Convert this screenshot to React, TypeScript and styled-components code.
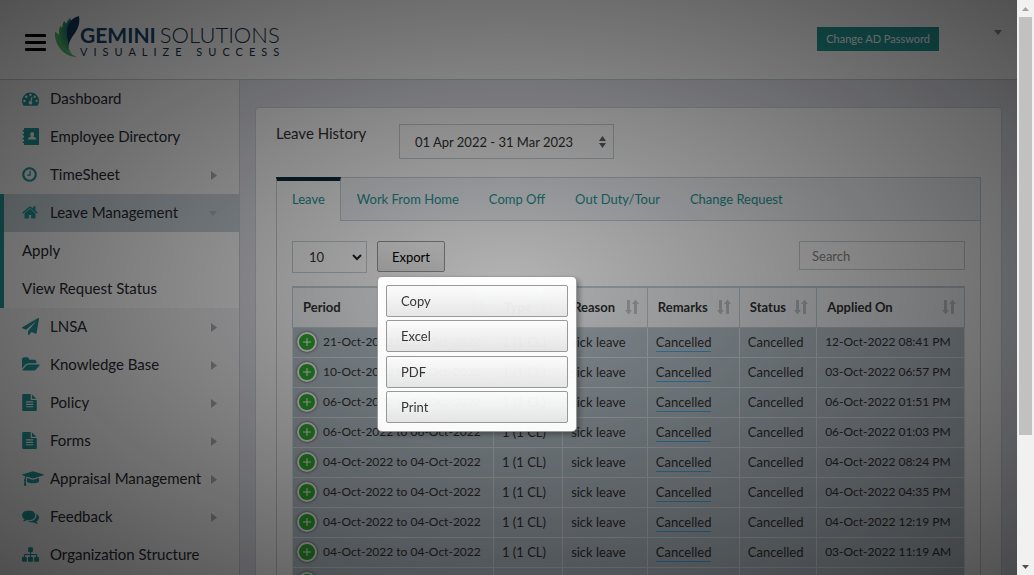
import React from "react";
import styled, { createGlobalStyle } from "styled-components";

const GlobalStyle = createGlobalStyle`
  *, *::before, *::after { box-sizing: border-box; }
  body {
    margin: 0;
    font-family: Lato, "Open Sans", sans-serif;
    font-size: 14px;
    color: #333;
    background: #e4e5ed;
  }
  button, input, select { font-family: inherit; }
`;

const teal = "#249696";
const line = "#c6d2d8";

const Shell = styled.div`
  display: grid;
  grid-template-columns: minmax(0, 1fr) 17px;
  height: 100vh;
  overflow: hidden;
`;

const Page = styled.div`
  height: 100vh;
  overflow: hidden;
`;

const Header = styled.header`
  display: flex;
  align-items: flex-start;
  height: 80px;
  padding: 0 15px 0 25px;
  background: #fff;
  border-bottom: 1px solid #bfd3cf;
`;

const MenuToggle = styled.button`
  display: flex;
  flex-direction: column;
  gap: 4px;
  width: 21px;
  margin-top: 34px;
  padding: 0;
  border: 0;
  background: none;
`;

const Bar = styled.span`
  height: 3px;
  width: 100%;
  border-radius: 1px;
  background: #000;
`;

const Logo = styled.a`
  display: flex;
  margin: 15px 0 0 9px;
  text-decoration: none;
`;

const LogoWords = styled.span`
  display: block;
  padding-top: 7px;
`;

const LogoName = styled.span`
  display: block;
  font-size: 22px;
  font-weight: 300;
  line-height: 26px;
  color: #17324a;
  white-space: nowrap;
`;

const LogoBold = styled.b`
  margin-right: 4px;
  font-size: 21px;
  font-weight: 700;
  color: #1b4a72;
`;

const LogoTag = styled.span`
  display: block;
  font-size: 11px;
  line-height: 8px;
  letter-spacing: 6px;
  color: #17324a;
  white-space: nowrap;
`;

const PasswordButton = styled.button`
  height: 24px;
  margin: 27px 55px 0 auto;
  padding: 0 9px;
  border: 0;
  background: #239a97;
  color: #fff;
  font-size: 11px;
  line-height: 24px;
`;

const UserCaret = styled.button`
  height: 5px;
  margin-top: 30px;
  padding: 0;
  border: 0;
  background: none;
  color: #8a8f96;
  display: flex;
`;

const Body = styled.div`
  display: grid;
  grid-template-columns: 240px minmax(0, 1fr);
  min-height: 100%;
`;

const Sidebar = styled.nav`
  background: #f5f5f7;
  border-right: 1px solid #c6d4d8;
`;

const NavList = styled.ul`
  margin: 0;
  padding: 0;
  list-style: none;
`;

const NavGroup = styled.li<{ $open?: boolean }>`
  border-left: ${(p) => (p.$open ? `4px solid ${teal}` : "0")};
`;

const NavLink = styled.a<{ $active?: boolean; $open?: boolean }>`
  display: flex;
  align-items: center;
  height: 38px;
  padding: 0 22px 2px ${(p) => (p.$open ? 18 : 22)}px;
  background: ${(p) => (p.$active ? "#cad5dc" : "transparent")};
  color: #2a2a30;
  font-size: 15px;
  text-decoration: none;
  white-space: nowrap;
`;

const SubLink = styled(NavLink)`
  background: #fff;
`;

const NavIcon = styled.span`
  flex: 0 0 28px;
  display: flex;
  color: ${teal};
`;

const NavCaret = styled.span<{ $faint?: boolean }>`
  display: flex;
  margin-left: auto;
  padding-top: 2px;
  color: ${(p) => (p.$faint ? "#b4bec5" : "#a9b0b6")};
`;

const Main = styled.main`
  padding: 27px 15px 0;
  background: #e4e5ed;
`;

const Card = styled.section`
  min-height: 600px;
  padding: 16px 20px 20px;
  background: #fff;
  border: 1px solid #cdd9dc;
  border-radius: 4px;
`;

const Filter = styled.div`
  display: flex;
  align-items: flex-start;
  margin-bottom: 18px;
`;

const FilterLabel = styled.label`
  width: 123px;
  font-size: 15px;
  line-height: 18px;
`;

const SelectBox = styled.div<{ $width: number }>`
  position: relative;
  width: ${(p) => p.$width}px;
`;

const Select = styled.select<{ $height: number; $pad: number }>`
  appearance: none;
  display: block;
  width: 100%;
  height: ${(p) => p.$height}px;
  padding: 0 ${(p) => p.$pad}px;
  border: 1px solid ${line};
  border-radius: 0;
  background: #fff;
  color: #333;
  font-size: 13px;
`;

const SelectMark = styled.span<{ $right: number }>`
  position: absolute;
  top: 0;
  bottom: 0;
  right: ${(p) => p.$right}px;
  display: flex;
  align-items: center;
  pointer-events: none;
`;

const Tabs = styled.div`
  display: flex;
  height: 44px;
  background: #f1f4f8;
  border: 1px solid ${line};
`;

const Tab = styled.button<{ $active?: boolean }>`
  height: ${(p) => (p.$active ? 44 : 42)}px;
  margin: ${(p) => (p.$active ? "-1px 2px 0 -1px" : "0 2px 0 0")};
  padding: ${(p) => (p.$active ? "0 15px 4px" : "0 14px")};
  border: 0 solid ${line};
  border-width: ${(p) => (p.$active ? "0 1px" : "0")};
  border-top: ${(p) => (p.$active ? "4px solid #0d2c3c" : "0")};
  background: ${(p) => (p.$active ? "#fff" : "transparent")};
  color: ${teal};
  font-size: 13px;
  white-space: nowrap;
`;

const Panel = styled.div`
  min-height: 480px;
  padding: 20px 15px;
  border: 1px solid ${line};
  border-top: 0;
`;

const Toolbar = styled.div`
  display: flex;
  align-items: flex-start;
  gap: 10px;
  height: 45px;
`;

const ExportWrap = styled.div`
  position: relative;
`;

const ExportButton = styled.button`
  display: block;
  width: 68px;
  height: 31px;
  padding: 0;
  border: 1px solid #999;
  border-radius: 2px;
  background: linear-gradient(to bottom, #fff 0%, #e9e9e9 100%);
  color: #000;
  font-size: 13px;
`;

const ExportMenu = styled.div`
  position: absolute;
  z-index: 20;
  top: 35px;
  left: 0;
  display: flex;
  flex-direction: column;
  justify-content: space-between;
  width: 200px;
  height: 156px;
  padding: 8px;
  background: #fff;
  border: 1px solid rgba(0, 0, 0, 0.4);
  border-radius: 5px;
  box-shadow: 3px 3px 5px rgba(0, 0, 0, 0.3);
  opacity: 0.97;
`;

const ExportItem = styled(ExportButton)`
  width: 100%;
  height: 32px;
  padding: 0 14px;
  text-align: left;
  color: #333;
`;

const Search = styled.input`
  width: 166px;
  height: 29px;
  margin-left: auto;
  padding: 0 12px;
  border: 1px solid ${line};
  background: #fff;
  font-size: 13px;
  &::placeholder { color: #888; opacity: 1; }
`;

const Table = styled.table`
  width: 100%;
  table-layout: fixed;
  border-collapse: collapse;
  border: 1px solid ${line};
  border-top-width: 2px;
`;

const Th = styled.th`
  height: 40px;
  padding: 0 8px 0 10px;
  border: 1px solid ${line};
  background: #f6f8fb;
  color: #333;
  font-size: 13px;
  font-weight: 700;
  text-align: left;
`;

const ThInner = styled.div`
  display: flex;
  align-items: center;
  justify-content: space-between;
`;

const Td = styled.td<{ $date?: boolean }>`
  height: 30px;
  padding: 0 0 0 8px;
  border: 1px solid #e0e6ea;
  background: #bac6ce;
  color: #333;
  font-size: ${(p) => (p.$date ? 12 : 13)}px;
  line-height: 20px;
  white-space: nowrap;
  overflow: hidden;
`;

const PeriodCell = styled.div`
  display: flex;
  align-items: center;
  gap: 6px;
  margin-left: -4px;
`;

const Expand = styled.button`
  display: flex;
  align-items: center;
  justify-content: center;
  width: 20px;
  height: 20px;
  padding: 0;
  border: 2px solid #fff;
  border-radius: 50%;
  background: #31b131;
  box-shadow: 0 0 3px #444;
`;

const Remark = styled.a`
  display: inline-block;
  height: 18px;
  line-height: 16px;
  border-bottom: 1px solid #45aef0;
  color: #333;
  text-decoration: none;
`;

const Overlay = styled.div`
  position: fixed;
  z-index: 10;
  inset: 0 17px 0 0;
  background: radial-gradient(ellipse farthest-corner at center, rgba(0, 0, 0, 0.3) 0%, rgba(0, 0, 0, 0.7) 100%);
  opacity: 0.97;
`;

const Scrollbar = styled.div`
  display: grid;
  grid-template-rows: 17px minmax(0, 1fr) 17px;
  justify-items: center;
  align-items: center;
  background: #f1f1f1;
`;

const Thumb = styled.div`
  align-self: start;
  width: 13px;
  height: 77.3%;
  background: #c1c1c1;
`;

type IconShape = { box: [number, number, number]; d: string };

const icons: Record<string, IconShape> = {
  gauge: { box: [0, 0, 1792], d: "M384 1152q0-53-37.5-90.5t-90.5-37.5-90.5 37.5-37.5 90.5 37.5 90.5 90.5 37.5 90.5-37.5 37.5-90.5zm192-448q0-53-37.5-90.5t-90.5-37.5-90.5 37.5-37.5 90.5 37.5 90.5 90.5 37.5 90.5-37.5 37.5-90.5zm428 481l101-382q6-26-7.5-48.5t-38.5-29.5-48 6.5-30 39.5l-101 382q-60 5-107 43.5t-63 98.5q-20 77 20 146t117 89 146-20 89-117q16-60-6-117t-72-91zm660-33q0-53-37.5-90.5t-90.5-37.5-90.5 37.5-37.5 90.5 37.5 90.5 90.5 37.5 90.5-37.5 37.5-90.5zm-640-640q0-53-37.5-90.5t-90.5-37.5-90.5 37.5-37.5 90.5 37.5 90.5 90.5 37.5 90.5-37.5 37.5-90.5zm448 192q0-53-37.5-90.5t-90.5-37.5-90.5 37.5-37.5 90.5 37.5 90.5 90.5 37.5 90.5-37.5 37.5-90.5zm320 448q0 261-141 483-19 29-54 29h-1402q-35 0-54-29-141-221-141-483 0-182 71-348t191-286 286-191 348-71 348 71 286 191 191 286 71 348z" },
  book: { box: [0, 0, 1792], d: "M300 0H1700q92 0 92 92V1700q0 92-92 92H300q-92 0-92-92V1580H110q-40 0-40-40v-90q0-40 40-40h98v-220H110q-40 0-40-40v-90q0-40 40-40h98V780H110q-40 0-40-40v-90q0-40 40-40h98V390H110q-40 0-40-40v-90q0-40 40-40h98V92q0-92 92-92zM1070 430q-95 0-150 65t-55 165q0 110 65 185v75l-190 75q-90 40-90 130v95h840v-95q0-90-90-130l-190-75v-75q65-75 65-185 0-100-55-165t-150-65z" },
  clock: { box: [128, 0, 1536], d: "M1024 544v448q0 14-9 23t-23 9h-320q-14 0-23-9t-9-23v-64q0-14 9-23t23-9h224v-352q0-14 9-23t23-9h64q14 0 23 9t9 23zm416 352q0-148-73-273t-198-198-273-73-273 73-198 198-73 273 73 273 198 198 273 73 273-73 198-198 73-273zm224 0q0 209-103 385.5t-279.5 279.5-385.5 103-385.5-103-279.5-279.5-103-385.5 103-385.5 279.5-279.5 385.5-103 385.5 103 279.5 279.5 103 385.5z" },
  home: { box: [64, 0, 1664], d: "M1472 992v480q0 26-19 45t-45 19h-384v-384h-256v384h-384q-26 0-45-19t-19-45v-480q0-1 .5-3t.5-3l575-474 575 474q1 2 1 6zm223-69l-62 74q-8 9-21 11h-3q-13 0-21-7l-692-577-692 577q-12 8-24 7-13-2-21-11l-62-74q-8-10-7-23.5t11-21.5l719-599q32-26 76-26t76 26l244 204v-195q0-14 9-23t23-9h192q14 0 23 9t9 23v408l219 182q10 8 11 21.5t-7 23.5z" },
  plane: { box: [0, 0, 1792], d: "M1764 11q33 24 27 64l-256 1536q-5 29-32 45-14 8-31 8-11 0-24-5l-453-185-242 295q-18 23-49 23-13 0-22-4-19-7-30.5-23.5t-11.5-36.5v-349l864-1059-1069 925-395-162q-37-14-40-55-2-40 32-59l1664-960q15-9 32-9 20 0 36 11z" },
  folder: { box: [0, 0, 1920], d: "M1879 952q0 31-31 66l-336 396q-43 51-120.5 86.5t-143.5 35.5h-1088q-34 0-60.5-13t-26.5-43q0-31 31-66l336-396q43-51 120.5-86.5t143.5-35.5h1088q34 0 60.5 13t26.5 43zm-343-344v160h-832q-94 0-197 47.5t-164 119.5l-337 396-5 6q0-4-.5-12.5t-.5-12.5v-960q0-92 66-158t158-66h320q92 0 158 66t66 158v32h544q92 0 158 66t66 158z" },
  file: { box: [128, 0, 1536], d: "M1596 476q14 14 28 36h-472v-472q22 14 36 28zm-476 164h544v1056q0 40-28 68t-68 28h-1344q-40 0-68-28t-28-68v-1600q0-40 28-68t68-28h800v544q0 40 28 68t68 28zm160 736v-64q0-14-9-23t-23-9h-704q-14 0-23 9t-9 23v64q0 14 9 23t23 9h704q14 0 23-9t9-23zm0-256v-64q0-14-9-23t-23-9h-704q-14 0-23 9t-9 23v64q0 14 9 23t23 9h704q14 0 23-9t9-23zm0-256v-64q0-14-9-23t-23-9h-704q-14 0-23 9t-9 23v64q0 14 9 23t23 9h704q14 0 23-9t9-23z" },
  cap: { box: [0, 0, 2304], d: "M1774 836l18 316q4 69-82 128t-235 93.5-323 34.5-323-34.5-235-93.5-82-128l18-316 574 181q22 7 48 7t48-7zm530-324q0 23-22 31l-1120 352q-4 1-10 1t-10-1l-652-206q-43 34-71 111.5t-34 178.5q63 36 63 109 0 69-58 107l58 433q2 14-8 25-9 11-24 11h-192q-15 0-24-11-10-11-8-25l58-433q-58-38-58-107 0-73 65-111 11-207 98-330l-333-104q-22-8-22-31t22-31l1120-352q4-1 10-1t10 1l1120 352q22 8 22 31z" },
  comments: { box: [0, 0, 1792], d: "M1408 768q0 139-94 257t-256.5 186.5-353.5 68.5q-86 0-176-16-124 88-278 128-36 9-86 16h-3q-11 0-20.5-8t-11.5-21q-1-3-1-6.5t.5-6.5 2-6l2.5-5 3.5-5.5 4-5 4.5-5 4-4.5q5-6 23-25t26-29.5 22.5-29 25-38.5 20.5-44q-124-72-195-177t-71-224q0-139 94-257t256.5-186.5 353.5-68.5 353.5 68.5 256.5 186.5 94 257zm384 256q0 120-71 224.5t-195 176.5q10 24 20.5 44t25 38.5 22.5 29 26 29.5 23 25q1 1 4 4.5t4.5 5 4 5 3.5 5.5l2.5 5 2 6 .5 6.5-1 6.5q-3 14-13 22t-22 7q-50-7-86-16-154-40-278-128-90 16-176 16-271 0-472-132 58 4 88 4 161 0 309-45t264-129q125-92 192-212t67-254q0-77-23-152 129 71 204 178t75 230z" },
  sitemap: { box: [0, 0, 1792], d: "M1792 1248v320q0 40-28 68t-68 28h-320q-40 0-68-28t-28-68v-320q0-40 28-68t68-28h96v-192h-512v192h96q40 0 68 28t28 68v320q0 40-28 68t-68 28h-320q-40 0-68-28t-28-68v-320q0-40 28-68t68-28h96v-192h-512v192h96q40 0 68 28t28 68v320q0 40-28 68t-68 28h-320q-40 0-68-28t-28-68v-320q0-40 28-68t68-28h96v-192q0-52 38-90t90-38h512v-192h-96q-40 0-68-28t-28-68v-320q0-40 28-68t68-28h320q40 0 68 28t28 68v320q0 40-28 68t-68 28h-96v192h512q52 0 90 38t38 90v192h96q40 0 68 28t28 68z" },
};

function Glyph({ name }: { name: string }) {
  const { box, d } = icons[name];
  return (
    <svg width={Math.round((box[2] / 1792) * 17)} height={17} viewBox={`${box[0]} ${box[1]} ${box[2]} 1792`} fill="currentColor" overflow="visible" aria-hidden="true">
      <path fillRule="evenodd" d={d} />
    </svg>
  );
}

function LeafMark() {
  return (
    <svg width="25" height="43" viewBox="0 0 25 43" aria-hidden="true">
      <path d="M0 17C-1 30 9 42 22 42C13 38 9 33 8 27C6 21 3 18 0 17Z" fill="#55c274" />
      <path d="M5 11C2 20 6 32 17 39C11 31 11 26 11 21C10 16 8 13 5 11Z" fill="#46b06b" />
      <path d="M9 6C5 14 7 26 14 34C11 25 14 20 14 15C13 11 11 8 9 6Z" fill="#34a074" />
      <path d="M15 3C8 10 9 19 12 27C12 19 15 15 17 11C17 8 16 5 15 3Z" fill="#2a8a88" />
      <path d="M24 1C16 3 12 9 12 17C12 22 13 26 13 33C14 26 17 22 20 18C24 12 25 7 24 1Z" fill="#143c64" />
    </svg>
  );
}

const Triangle = ({ dir, w = 6, h = 9 }: { dir: "up" | "down" | "right"; w?: number; h?: number }) => (
  <svg width={w} height={h} viewBox="0 0 10 10" preserveAspectRatio="none" fill="currentColor" aria-hidden="true">
    <path d={dir === "up" ? "M0 10L5 0L10 10Z" : dir === "down" ? "M0 0H10L5 10Z" : "M0 0L10 5L0 10Z"} />
  </svg>
);

const SortArrows = () => (
  <svg width="14" height="16" viewBox="0 0 14 16" fill="#c3c8cc" aria-hidden="true">
    <path d="M2 1h3v10h2l-3.500 4.500L0 11h2zM9 15h3V5h2L10.500 .500 7 5h2z" />
  </svg>
);

const before = [
  { icon: "gauge", label: "Dashboard" },
  { icon: "book", label: "Employee Directory" },
  { icon: "clock", label: "TimeSheet", more: true },
];

const after = [
  { icon: "plane", label: "LNSA", more: true },
  { icon: "folder", label: "Knowledge Base", more: true },
  { icon: "file", label: "Policy", more: true },
  { icon: "file", label: "Forms", more: true },
  { icon: "cap", label: "Appraisal Management", more: true },
  { icon: "comments", label: "Feedback", more: true },
  { icon: "sitemap", label: "Organization Structure" },
];

const rows = [
  ["21-Oct-2022", "12-Oct-2022 08:41 PM"],
  ["10-Oct-2022", "03-Oct-2022 06:57 PM"],
  ["06-Oct-2022", "06-Oct-2022 01:51 PM"],
  ["06-Oct-2022", "06-Oct-2022 01:03 PM"],
  ["04-Oct-2022", "04-Oct-2022 08:24 PM"],
  ["04-Oct-2022", "04-Oct-2022 04:35 PM"],
  ["04-Oct-2022", "04-Oct-2022 12:19 PM"],
  ["04-Oct-2022", "03-Oct-2022 11:19 AM"],
  ["03-Oct-2022", "03-Oct-2022 10:42 AM"],
];

const columns = [
  { name: "Period", share: "29.9%" },
  { name: "Type", share: "10.3%" },
  { name: "Reason", share: "12.6%" },
  { name: "Remarks", share: "13.7%" },
  { name: "Status", share: "11.5%" },
  { name: "Applied On", share: "22%" },
];

function NavItem({ icon, label, more }: { icon: string; label: string; more?: boolean }) {
  return (
    <NavGroup>
      <NavLink href="#">
        <NavIcon><Glyph name={icon} /></NavIcon>
        {label}
        {more && <NavCaret><Triangle dir="right" /></NavCaret>}
      </NavLink>
    </NavGroup>
  );
}

export default function App() {
  return (
    <>
      <GlobalStyle />
      <Shell>
        <Page>
          <Header>
            <MenuToggle aria-label="Toggle menu"><Bar /><Bar /><Bar /></MenuToggle>
            <Logo href="#">
              <LeafMark />
              <LogoWords>
                <LogoName><LogoBold>GEMINI</LogoBold>SOLUTIONS</LogoName>
                <LogoTag>VISUALIZE SUCCESS</LogoTag>
              </LogoWords>
            </Logo>
            <PasswordButton>Change AD Password</PasswordButton>
            <UserCaret aria-label="User menu"><Triangle dir="down" w={8} h={5} /></UserCaret>
          </Header>
          <Body>
            <Sidebar>
              <NavList>
                {before.map((item) => <NavItem key={item.label} {...item} />)}
                <NavGroup $open>
                  <NavLink href="#" $active $open>
                    <NavIcon><Glyph name="home" /></NavIcon>
                    Leave Management
                    <NavCaret $faint><Triangle dir="down" w={8} h={5} /></NavCaret>
                  </NavLink>
                  <SubLink href="#" $open>Apply</SubLink>
                  <SubLink href="#" $open>View Request Status</SubLink>
                </NavGroup>
                {after.map((item) => <NavItem key={item.label} {...item} />)}
              </NavList>
            </Sidebar>
            <Main>
              <Card>
                <Filter>
                  <FilterLabel htmlFor="period">Leave History</FilterLabel>
                  <SelectBox $width={215}>
                    <Select id="period" $height={35} $pad={15}>
                      <option>01 Apr 2022 - 31 Mar 2023</option>
                    </Select>
                    <SelectMark $right={8}>
                      <svg width="7" height="12" viewBox="0 0 7 12" fill="#5d676e" aria-hidden="true">
                        <path d="M0 5L3.500 0L7 5ZM0 7H7L3.500 12Z" />
                      </svg>
                    </SelectMark>
                  </SelectBox>
                </Filter>
                <Tabs role="tablist">
                  <Tab role="tab" $active>Leave</Tab>
                  <Tab role="tab">Work From Home</Tab>
                  <Tab role="tab">Comp Off</Tab>
                  <Tab role="tab">Out Duty/Tour</Tab>
                  <Tab role="tab">Change Request</Tab>
                </Tabs>
                <Panel>
                  <Toolbar>
                    <SelectBox $width={75}>
                      <Select aria-label="Rows per page" $height={32} $pad={16}>
                        <option>10</option>
                      </Select>
                      <SelectMark $right={5}>
                        <svg width="10" height="7" viewBox="0 0 10 7" fill="none" stroke="#222" strokeWidth="2" aria-hidden="true">
                          <path d="M1 1L5 5L9 1" />
                        </svg>
                      </SelectMark>
                    </SelectBox>
                    <ExportWrap>
                      <ExportButton>Export</ExportButton>
                      <ExportMenu>
                        <ExportItem>Copy</ExportItem>
                        <ExportItem>Excel</ExportItem>
                        <ExportItem>PDF</ExportItem>
                        <ExportItem>Print</ExportItem>
                      </ExportMenu>
                    </ExportWrap>
                    <Search type="search" placeholder="Search" aria-label="Search" />
                  </Toolbar>
                  <Table>
                    <colgroup>
                      {columns.map((c) => <col key={c.name} width={c.share} />)}
                    </colgroup>
                    <thead>
                      <tr>
                        {columns.map((c) => (
                          <Th key={c.name}><ThInner>{c.name}<SortArrows /></ThInner></Th>
                        ))}
                      </tr>
                    </thead>
                    <tbody>
                      {rows.map(([day, applied], i) => (
                        <tr key={i}>
                          <Td $date>
                            <PeriodCell>
                              <Expand aria-label="Show details">
                                <svg width="8" height="8" viewBox="0 0 8 8" fill="none" stroke="#fff" aria-hidden="true">
                                  <path d="M4 0V8M0 4H8" />
                                </svg>
                              </Expand>
                              {day} to {day}
                            </PeriodCell>
                          </Td>
                          <Td>1 (1 CL)</Td>
                          <Td>sick leave</Td>
                          <Td><Remark href="#">Cancelled</Remark></Td>
                          <Td>Cancelled</Td>
                          <Td $date>{applied}</Td>
                        </tr>
                      ))}
                    </tbody>
                  </Table>
                </Panel>
              </Card>
            </Main>
          </Body>
        </Page>
        <Scrollbar aria-hidden="true">
          <svg width="7" height="4" viewBox="0 0 7 4" fill="#a3a3a3"><path d="M0 4L3.500 0L7 4Z" /></svg>
          <Thumb />
          <svg width="7" height="4" viewBox="0 0 7 4" fill="#505050"><path d="M0 0H7L3.500 4Z" /></svg>
        </Scrollbar>
      </Shell>
      <Overlay />
    </>
  );
}
